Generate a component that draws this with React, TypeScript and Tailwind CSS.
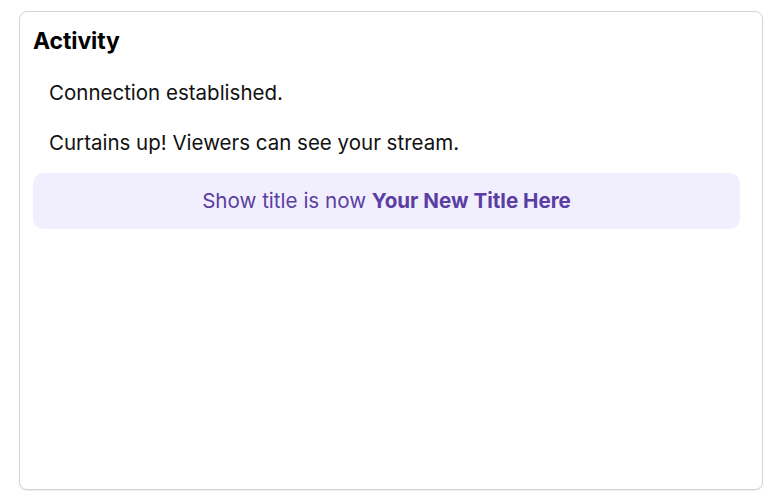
export default function App() {
  const events = [
    "Connection established.",
    "Curtains up! Viewers can see your stream.",
  ];

  return (
    <div
      className="h-[500px] w-[772px] bg-white"
      style={{ fontFamily: "Inter, 'Noto Sans', sans-serif" }}
    >
      <div className="absolute left-[19px] top-[11px] h-[479px] w-[744px] rounded-[8px] border border-[#d4d4d4] bg-white shadow-[0_1px_1px_rgba(0,0,0,0.08)]">
        <div className="pl-[13px] pr-[22px] pt-[15px]">
          <h2 className="text-[23px] leading-[28px] font-bold text-black tracking-[-0.1px]">
            Activity
          </h2>
          <ul className="mt-[13px]">
            {events.map((e) => (
              <li
                key={e}
                className="px-[16px] py-[12px] text-[20.5px] leading-[26px] text-[#111]"
              >
                {e}
              </li>
            ))}
          </ul>
          <div className="mt-[5px] flex h-[56px] items-center justify-center rounded-[10px] bg-[#f1effd] text-[20.6px] text-[#5b3ea3]">
            <span>
              Show title is now <strong className="font-bold">Your New Title Here</strong>
            </span>
          </div>
        </div>
      </div>
    </div>
  );
}
